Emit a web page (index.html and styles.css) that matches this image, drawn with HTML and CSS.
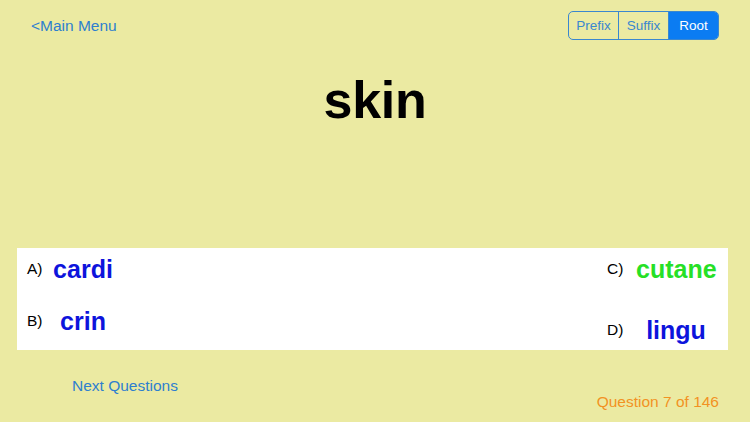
FILE: index.html
```html
<!DOCTYPE html>
<html>
<head>
<meta charset="utf-8">
<link rel="stylesheet" href="styles.css">
</head>
<body>
<div class="page">
  <div class="topbar">
    <span class="link">&lt;Main Menu</span>
    <div class="segmented">
      <span class="seg">Prefix</span>
      <span class="seg">Suffix</span>
      <span class="seg active">Root</span>
    </div>
  </div>
  <div class="word">skin</div>
  <div class="panel">
    <div class="col col-left">
      <div class="opt"><span class="opt-label">A)</span><span class="opt-word blue">cardi</span></div>
      <div class="opt opt-second"><span class="opt-label">B)</span><span class="opt-word blue">crin</span></div>
    </div>
    <div class="col col-right">
      <div class="opt"><span class="opt-label">C)</span><span class="opt-word green">cutane</span></div>
      <div class="opt opt-fourth"><span class="opt-label">D)</span><span class="opt-word blue">lingu</span></div>
    </div>
  </div>
  <div class="footer">
    <span class="link">Next Questions</span>
    <span class="count">Question 7 of 146</span>
  </div>
</div>
</body>
</html>
```
FILE: styles.css
```css
html, body {
  margin: 0;
  padding: 0;
}
body {
  background: #ebeaa2;
  font-family: "Liberation Sans", Arial, Helvetica, sans-serif;
  width: 750px;
  height: 422px;
  overflow: hidden;
}
.page {
  display: flex;
  flex-direction: column;
  height: 422px;
}
.topbar {
  display: flex;
  justify-content: space-between;
  align-items: center;
  padding: 11px 31px 0 31px;
  height: 29px;
}
.link {
  color: #2e7fcf;
  font-size: 15.5px;
  line-height: 18px;
}
.segmented {
  display: flex;
  border: 1px solid #3a87cf;
  border-radius: 5px;
  overflow: hidden;
  height: 27px;
}
.seg {
  width: 49px;
  display: flex;
  align-items: center;
  justify-content: center;
  font-size: 13.5px;
  color: #3a87cf;
}
.seg + .seg {
  border-left: 1px solid #3a87cf;
}
.seg.active {
  background: #0b7cf2;
  color: #ffffff;
}
.word {
  margin-top: 30px;
  text-align: center;
  font-size: 52px;
  font-weight: bold;
  line-height: 60px;
  color: #000;
  letter-spacing: -0.3px;
}
.panel {
  margin: 118px 22px 0 17px;
  height: 102px;
  background: #ffffff;
  display: flex;
  justify-content: space-between;
}
.col {
  display: flex;
  flex-direction: column;
  padding-top: 6px;
}
.col-left {
  padding-left: 10px;
}
.col-right {
  padding-right: 12px;
}
.opt {
  display: flex;
  align-items: center;
  height: 30px;
}
.opt-second {
  margin-top: 22px;
}
.opt-fourth {
  margin-top: 31px;
}
.opt-label {
  font-size: 15.5px;
  color: #000;
  width: 16px;
}
.col-right .opt-label {
  width: 29px;
}
.opt-word {
  width: 80px;
  text-align: center;
  font-size: 25px;
  font-weight: bold;
  line-height: 30px;
}
.blue {
  color: #0d14dc;
}
.green {
  color: #26e026;
}
.footer {
  display: flex;
  justify-content: space-between;
  align-items: flex-start;
  margin-top: 27px;
  padding: 0 31px 0 72px;
}
.count {
  color: #f29222;
  font-size: 15.5px;
  line-height: 18px;
  margin-top: 16px;
}
```
